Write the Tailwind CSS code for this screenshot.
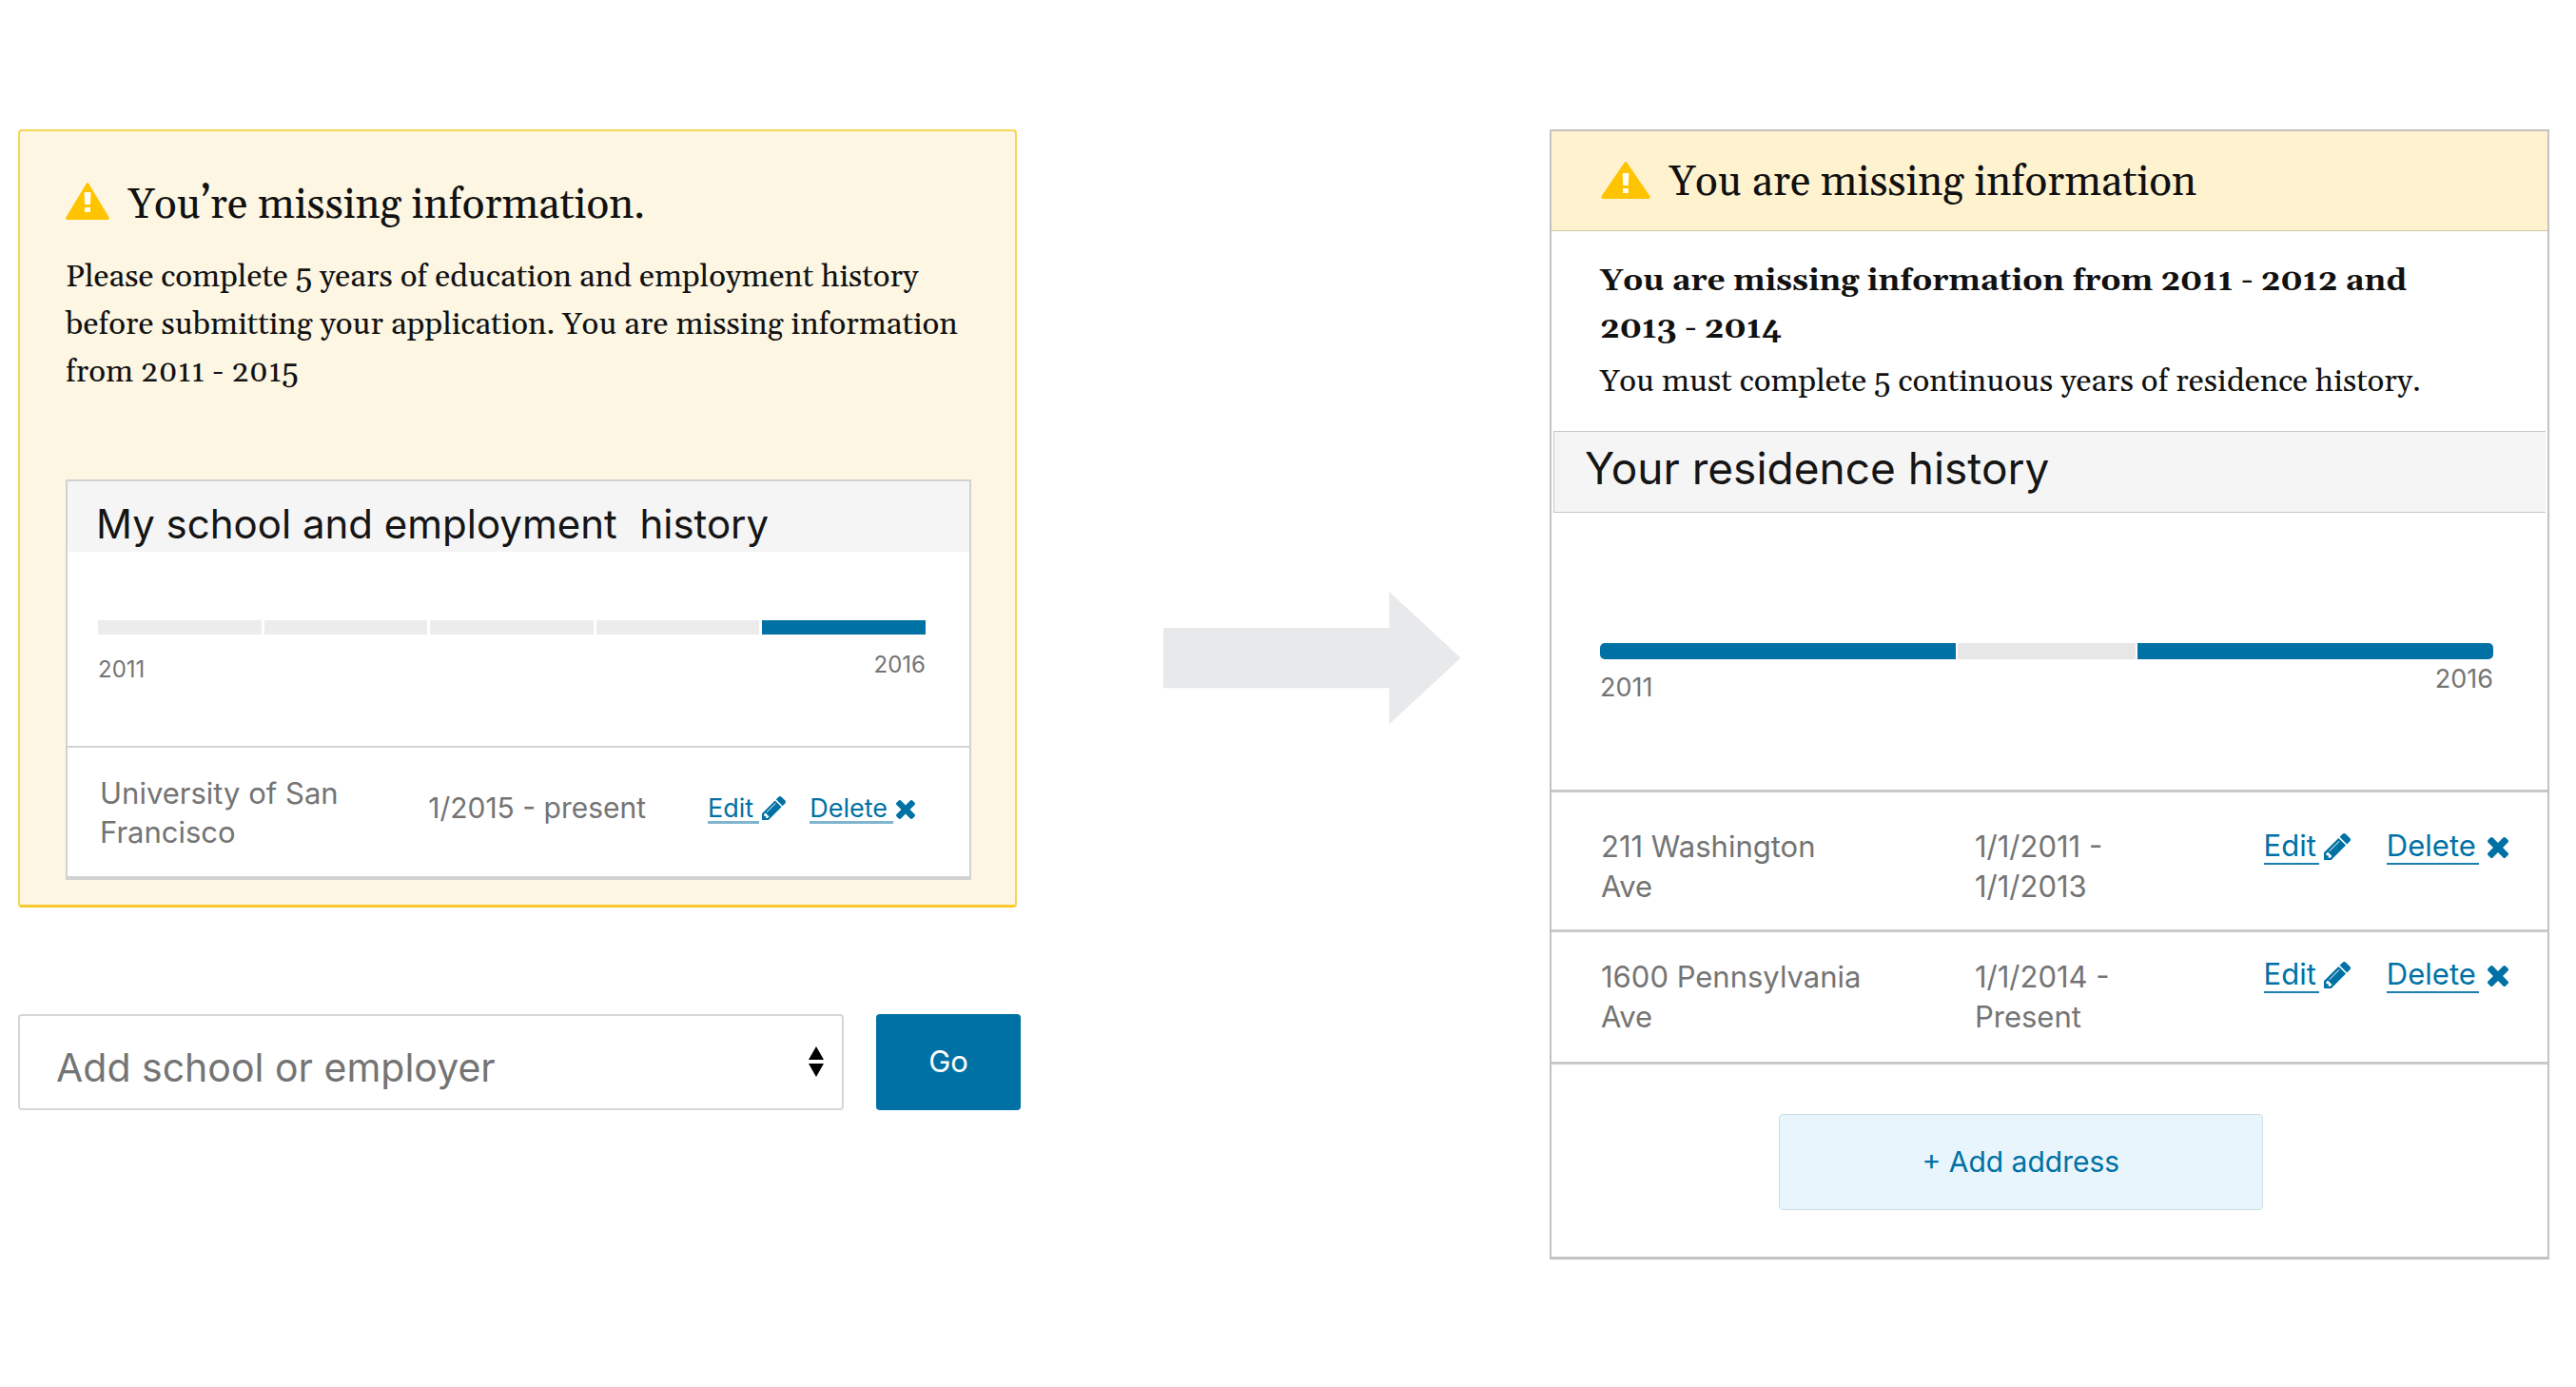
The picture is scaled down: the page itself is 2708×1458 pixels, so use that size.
<!DOCTYPE html>
<html lang="en">
<head>
<meta charset="utf-8">
<meta name="viewport" content="width=device-width, initial-scale=1">
<title>Missing information</title>
<script src="https://cdn.jsdelivr.net/npm/@tailwindcss/browser@4"></script>
</head>
<body class="bg-white pt-[136px] pr-7 pb-16 pl-[19px] font-[Inter,'Open_Sans',sans-serif] text-[#747474]">

<!-- Shared icons -->
<svg class="hidden" aria-hidden="true">
  <symbol id="warning" viewBox="0 0 46 39">
    <path fill="#ffc400" d="M21.600 1.200Q23 -1 24.400 1.200L45.400 36Q46.500 39 43.500 39H2.500Q-0.500 39 0.600 36Z"/>
    <path fill="#fffdf2" d="M19.500 10.500Q19.500 10 20 10H26Q26.500 10 26.500 10.500L26 22Q26 23 25.200 23H20.800Q20 23 20 22ZM20 26H26V31H20Z"/>
  </symbol>
  <symbol id="pencil" viewBox="0 149 1515 1515">
    <path fill="currentColor" d="M363 1536l91-91-235-235-91 91v107h128v128h107zm523-928q0-22-22-22-10 0-17 7l-542 542q-7 7-7 17 0 22 22 22 10 0 17-7l542-542q7-7 7-17zm-54-192l416 416-832 832h-416v-416zm683 96q0 53-37 90l-166 166-416-416 166-165q36-38 90-38 53 0 91 38l235 234q37 39 37 91z"/>
  </symbol>
  <symbol id="cross" viewBox="302 344 1188 1188">
    <path fill="currentColor" d="M1490 1300q0 40-28 68l-136 136q-28 28-68 28t-68-28l-294-294-294 294q-28 28-68 28t-68-28l-136-136q-28-28-28-68t28-68l294-294-294-294q-28-28-28-68t28-68l136-136q28-28 68-28t68 28l294 294 294-294q28-28 68-28t68 28l136 136q28 28 28 68t-28 68l-294 294 294 294q28 28 28 68z"/>
  </symbol>
</svg>

<main class="grid grid-cols-[1054fr_556fr_1051fr] items-start">

  <!-- Education and employment -->
  <section>
    <div class="mr-1 rounded border-2 border-b-[3px] border-[#f8d552] border-b-[#fac82b] bg-[#fdf6e3] pt-[50px] pr-[46px] pb-[26px] pl-12">
      <div class="font-[Gelasio,'Liberation_Serif',serif] text-[#111] oldstyle-nums">
        <div class="flex items-start gap-5">
          <svg class="mt-1 h-[39px] w-[46px]" aria-hidden="true"><use href="#warning"/></svg>
          <h1 class="text-[44px] leading-[56px]">You’re missing information.</h1>
        </div>
        <p class="mt-[22px] text-[33px] leading-[50px]">Please complete 5 years of education and employment history before submitting your application. You are missing information from 2011 - 2015</p>
      </div>

      <div class="mt-[88px] border-2 border-b-4 border-[#d2d2d0] bg-white">
        <h2 class="bg-[#f5f5f5] px-[30px] pt-4 text-[42px] leading-[58px] text-[#151515]">My school and employment&nbsp; history</h2>
        <div class="pt-[72px] pr-[46px] pb-16 pl-8">
          <div class="grid h-[15px] grid-cols-5 gap-[3px]">
            <span class="bg-[#ececec]"></span>
            <span class="bg-[#ececec]"></span>
            <span class="bg-[#ececec]"></span>
            <span class="bg-[#ececec]"></span>
            <span class="bg-[#0071a4]"></span>
          </div>
          <div class="mt-4 flex items-start justify-between text-2xl leading-[32px]">
            <span class="pt-[5px]">2011</span>
            <span>2016</span>
          </div>
        </div>
        <table class="w-full table-fixed border-t-2 border-[#d2d2d0] text-left">
          <tbody>
            <tr class="h-[136px]">
              <td class="w-[40%] pr-4 pl-[34px] text-[31px] leading-[41px]">University of San Francisco</td>
              <td class="w-[31%] pb-2 text-[30px] leading-[41px]">1/2015 - present</td>
              <td class="pb-1">
                <div class="flex gap-[25px] text-[27px] leading-[26px] text-[#0071a4]">
                  <a href="#" class="flex items-start gap-[3px]"><span class="border-b-[3px] border-[#7fb5cf] pr-1.5">Edit</span><svg class="size-[25px]" aria-hidden="true"><use href="#pencil"/></svg></a>
                  <a href="#" class="flex items-start gap-[3px]"><span class="border-b-[3px] border-[#7fb5cf] pr-1.5">Delete</span><svg class="mt-1 size-5" aria-hidden="true"><use href="#cross"/></svg></a>
                </div>
              </td>
            </tr>
          </tbody>
        </table>
      </div>
    </div>

    <form class="mt-[112px] flex gap-[34px]">
      <div class="relative flex-1">
        <select aria-label="School or employer" class="h-[101px] w-full appearance-none rounded border-2 border-[#d6d6d6] bg-white pt-3 pr-16 pl-[38px] text-[41px] text-[#747474]">
          <option>Add school or employer</option>
        </select>
        <svg class="pointer-events-none absolute top-[34px] right-[21px] h-8 w-4" viewBox="0 0 16 32" fill="#000" aria-hidden="true"><path d="M8 0L16 14H0ZM0 18H16L8 32Z"/></svg>
      </div>
      <button type="button" class="h-[101px] w-[152px] rounded bg-[#0071a4] text-[31px] text-white">Go</button>
    </form>
  </section>

  <!-- Transition arrow -->
  <div class="mt-[486px] pl-[27%]">
    <svg class="w-[77%]" viewBox="0 0 312 139" fill="#e8e9eb" aria-hidden="true"><path d="M0 38H237V0L312 69.500L237 139V101H0Z"/></svg>
  </div>

  <!-- Residence history -->
  <section class="border-2 border-b-[3px] border-[#c3c3c3] bg-white">
    <div class="font-[Gelasio,'Liberation_Serif',serif] text-[#111] oldstyle-nums">
      <div class="flex items-start gap-5 border-b border-[#d0c5a8] bg-[#fff2cf] px-[52px] pt-[26px] pb-[22px]">
        <svg class="mt-1.5 h-[39px] w-[52px]" viewBox="0 0 46 39" preserveAspectRatio="none" aria-hidden="true"><path fill="#ffc400" d="M21.600 1.200Q23 -1 24.400 1.200L45.400 36Q46.500 39 43.500 39H2.500Q-0.500 39 0.600 36Z"/><path fill="#fffdf2" d="M20 12.500Q20 12 20.500 12H25.500Q26 12 26 12.500L25.500 24Q25.500 25 24.800 25H21.200Q20.500 25 20.500 24ZM20.500 28H25.500V33H20.500Z"/></svg>
        <h1 class="text-[44px] leading-[56px]">You are missing information</h1>
      </div>
      <div class="pt-[27px] pr-[100px] pb-[27px] pl-[51px] text-[33px] leading-[50px]">
        <p class="font-bold">You are missing information from 2011 - 2012 and 2013 - 2014</p>
        <p class="mt-1.5">You must complete 5 continuous years of residence history.</p>
      </div>
    </div>

    <h2 class="mx-[2px] border-y border-l border-[#c6c6c6] bg-[#f5f5f5] pt-1 pb-3 pl-8 text-[46px] leading-[68px] text-[#151515]">Your residence history</h2>

    <div class="pt-[137px] pr-[57px] pb-[91px] pl-[51px]">
      <div class="grid h-[17px] grid-cols-[2fr_1fr_2fr] gap-[2px]">
        <span class="rounded-l-[5px] bg-[#0071a4]"></span>
        <span class="bg-[#e7e7e7]"></span>
        <span class="rounded-r-[5px] bg-[#0071a4]"></span>
      </div>
      <div class="mt-[5px] flex items-start justify-between text-[27px] leading-[32px]">
        <span class="pt-[9px]">2011</span>
        <span>2016</span>
      </div>
    </div>

    <table class="w-full table-fixed text-left text-[31px] leading-[42px]">
      <tbody>
        <tr class="border-t-[3px] border-[#c9c9c9] align-top">
          <td class="w-[42.500%] pt-9 pr-28 pb-6 pl-[52px]">211 Washington Ave</td>
          <td class="w-[29%] pt-9 pr-20">1/1/2011 - 1/1/2013</td>
          <td class="pt-[38px]">
            <div class="flex gap-[38px] leading-[36px] text-[#0071a4]">
              <a href="#" class="flex items-start gap-[5px]"><span class="border-b-2 border-[#1a7fae] pr-[3px]">Edit</span><svg class="mt-[5px] size-7" aria-hidden="true"><use href="#pencil"/></svg></a>
              <a href="#" class="flex items-start gap-[9px]"><span class="border-b-2 border-[#1a7fae] pr-[3px]">Delete</span><svg class="mt-[9px] size-[22px]" aria-hidden="true"><use href="#cross"/></svg></a>
            </div>
          </td>
        </tr>
        <tr class="border-y-[3px] border-[#c9c9c9] align-top">
          <td class="pt-[26px] pr-28 pb-[26px] pl-[52px]">1600 Pennsylvania Ave</td>
          <td class="pt-[26px] pr-20">1/1/2014 - Present</td>
          <td class="pt-[26px]">
            <div class="flex gap-[38px] leading-[36px] text-[#0071a4]">
              <a href="#" class="flex items-start gap-[5px]"><span class="border-b-2 border-[#1a7fae] pr-[3px]">Edit</span><svg class="mt-[5px] size-7" aria-hidden="true"><use href="#pencil"/></svg></a>
              <a href="#" class="flex items-start gap-[9px]"><span class="border-b-2 border-[#1a7fae] pr-[3px]">Delete</span><svg class="mt-[9px] size-[22px]" aria-hidden="true"><use href="#cross"/></svg></a>
            </div>
          </td>
        </tr>
      </tbody>
    </table>

    <div class="pt-[52px] pb-[49px] pl-[22.800%]">
      <button type="button" class="h-[101px] w-[63%] rounded border border-[#cddde6] bg-[#e8f5fd] text-[30px] text-[#0071a4]">+ Add address</button>
    </div>
  </section>
</main>
</body>
</html>
